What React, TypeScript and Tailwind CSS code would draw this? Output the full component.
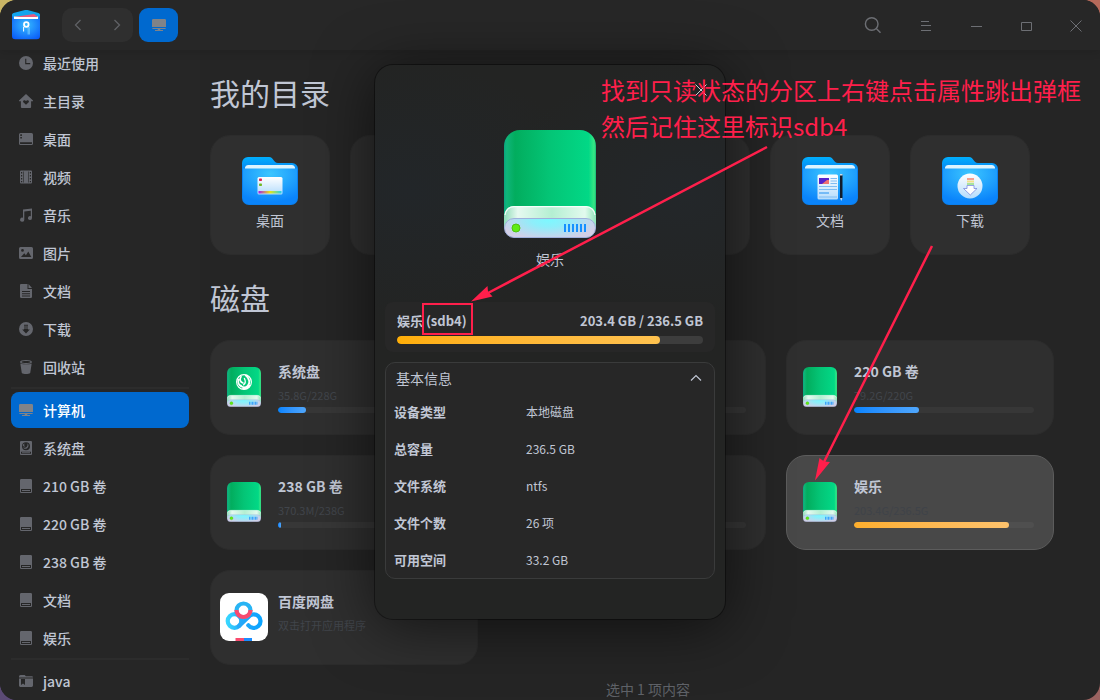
import { useId, type ReactNode } from "react";

type IconName =
  | "recent" | "home" | "desktop" | "video" | "music" | "picture" | "document"
  | "download" | "trash" | "computer" | "system" | "disk" | "folder";

function SideIcon({ name }: { name: IconName }) {
  const shapes: Record<IconName, ReactNode> = {
    recent: (
      <path fillRule="evenodd" d="M7 0a7 7 0 1 1 0 14A7 7 0 0 1 7 0ZM6.2 2.8v5.4h5V7.1H7.3V2.8Z" />
    ),
    home: (
      <path fillRule="evenodd" d="M7 0l7 6.4v.9h-1.9V13a1 1 0 0 1-1 1H2.9a1 1 0 0 1-1-1V7.300H0v-.9ZM7 10.800l2.700-2.600c.9-1.300-.9-2.700-2.200-1.500L7 7.100l-.5-.4C5.200 5.500 3.400 6.900 4.300 8.200Z" />
    ),
    desktop: (
      <path fillRule="evenodd" d="M1.500 1h11A1.500 1.500 0 0 1 14 2.500v9a1.500 1.500 0 0 1-1.500 1.500h-11A1.500 1.500 0 0 1 0 11.500v-9A1.500 1.500 0 0 1 1.500 1ZM1.300 2.300v1.600h1.600V2.300ZM1.300 5v1.600h1.600V5ZM1 10.200v1.300c0 .3.200.5.5.5h11c.3 0 .5-.2.500-.5v-1.300Z" />
    ),
    video: (
      <path fillRule="evenodd" d="M2 .5h10a1 1 0 0 1 1 1v11a1 1 0 0 1-1 1H2a1 1 0 0 1-1-1v-11a1 1 0 0 1 1-1ZM2 2v1.500h1.200V2Zm0 3v1.500h1.200V5Zm0 3v1.500h1.200V8Zm0 3v1.300h1.200V11Zm8.800-9v1.500H12V2Zm0 3v1.500H12V5Zm0 3v1.500H12V8Zm0 3v1.300H12V11ZM4 1.500v11h.6v-11Zm5.400 0v11h.6v-11Z" />
    ),
    music: (
      <path d="M4 1.600L13 .6v9.200a2 2 0 1 1-1.200-1.600V2.800L5.300 3.500v8a2.100 2.100 0 1 1-1.300-1.700Z" />
    ),
    picture: (
      <path fillRule="evenodd" d="M1.500 1h11A1.500 1.500 0 0 1 14 2.500v9a1.500 1.500 0 0 1-1.500 1.500h-11A1.500 1.500 0 0 1 0 11.500v-9A1.500 1.500 0 0 1 1.500 1ZM3.500 3a1.400 1.400 0 1 0 0 2.800 1.400 1.400 0 0 0 0-2.800ZM2 11h10.300L9.300 5.500 6.900 9.200 5.300 7.200Z" />
    ),
    document: (
      <path fillRule="evenodd" d="M2 0h6.500v5H13v7.800a1.200 1.200 0 0 1-1.200 1.200H2.200A1.200 1.200 0 0 1 1 12.800V1a1 1 0 0 1 1-1ZM9.500 0L13 4H9.500ZM3 7v1h8V7Zm0 2.200v1h8v-1Zm0 2.300v1h8v-1Z" />
    ),
    download: (
      <path fillRule="evenodd" d="M7 0a7 7 0 1 1 0 14A7 7 0 0 1 7 0ZM5 2.700v1h4v-1ZM5 4.600v1h4v-1ZM5 6.500v1H3.200L7 11.400l3.800-3.900H9v-1Z" />
    ),
    trash: (
      <>
        <path fillRule="evenodd" d="M7 0c3.500 0 6 .8 6 2S10.500 4 7 4 1 3.200 1 2s2.500-2 6-2Zm0 1C4.500 1 2.500 1.400 2.500 2S4.500 3 7 3s4.500-.4 4.500-1S9.500 1 7 1Z" />
        <path d="M1.300 3.400C4.500 4.600 9.500 4.600 12.700 3.400L11.200 13c-1.500 1.300-6.900 1.300-8.400 0Z" />
      </>
    ),
    computer: (
      <path d="M1.300 1h11.400A1.300 1.300 0 0 1 14 2.300V9H0V2.300A1.300 1.300 0 0 1 1.300 1ZM0 10h14c-.2.700-.6 1-1.300 1H8.300v.9H11v1H3v-1h2.700V11H1.300c-.7 0-1.100-.3-1.300-1Z" />
    ),
    system: (
      <>
        <path fillRule="evenodd" d="M2 0h10a1 1 0 0 1 1 1v12a1 1 0 0 1-1 1H2a1 1 0 0 1-1-1V1a1 1 0 0 1 1-1ZM7 1.200a4 4 0 1 0 0 8 4 4 0 0 0 0-8ZM2 10.800v2h10v-2Z" />
        <path d="M8.500 2.200c1.600 1.200 1.500 4-.7 5.300-1.700.9-3.300 0-3.500-1.300 1.200 1 2.600.8 3.500-.4.800-1.100.8-2.300.7-3.600ZM5.700 2.500c-.8 1-.7 2.500.7 2.900-1.400.5-2.800-.5-2.600-1.500.3-.7 1.100-1.200 1.900-1.400Z" />
        <path d="M3 11.300h8v.8H3Z" />
      </>
    ),
    disk: (
      <path fillRule="evenodd" d="M2.200 0h9.600A1.200 1.200 0 0 1 13 1.200v11.600a1.200 1.200 0 0 1-1.200 1.200H2.200A1.200 1.200 0 0 1 1 12.800V1.200A1.200 1.200 0 0 1 2.200 0ZM2 10v3h10v-3Zm1 1h8v1H3Z" />
    ),
    folder: (
      <path fillRule="evenodd" d="M1.500 1h4.200l1.200 1.300h6A1.100 1.100 0 0 1 14 3.400H0v-.9A1.500 1.500 0 0 1 1.500 1ZM0 4.400h14v7.200a1.400 1.400 0 0 1-1.400 1.400H1.400A1.400 1.400 0 0 1 0 11.600ZM2 5v6l2-1.600L6 11V5Z" />
    ),
  };
  return (
    <svg viewBox="0 0 14 14" className="size-3.5 shrink-0" fill="currentColor" aria-hidden="true">
      {shapes[name]}
    </svg>
  );
}

function DriveIcon({ className, system }: { className: string; system?: boolean }) {
  const id = useId();
  return (
    <svg viewBox="0 0 92 108" className={className} aria-hidden="true">
      <defs>
        <linearGradient id={`${id}b`}>
          <stop offset="0" stopColor="#0aa57f" />
          <stop offset="0.03" stopColor="#10b57a" />
          <stop offset="0.12" stopColor="#02ad5e" />
          <stop offset="0.5" stopColor="#04c576" />
          <stop offset="0.92" stopColor="#02d886" />
          <stop offset="0.98" stopColor="#38e884" />
          <stop offset="1" stopColor="#18b878" />
        </linearGradient>
        <linearGradient id={`${id}t`}>
          <stop offset="0" stopColor="#8fdcb8" />
          <stop offset="0.15" stopColor="#e6f9f0" />
          <stop offset="0.52" stopColor="#b4efd2" />
          <stop offset="0.88" stopColor="#e2faee" />
          <stop offset="1" stopColor="#90e4ba" />
        </linearGradient>
        <radialGradient id={`${id}f`} gradientUnits="userSpaceOnUse" cx="0" cy="0" r="1" gradientTransform="translate(45 90) scale(50 20)">
          <stop offset="0" stopColor="#7cf8ff" />
          <stop offset="0.35" stopColor="#8eeefa" />
          <stop offset="0.75" stopColor="#b9daef" />
          <stop offset="1" stopColor="#d2cfe6" />
        </radialGradient>
      </defs>
      <path d="M0 16A16 16 0 0 1 16 0h60a16 16 0 0 1 16 16v76H0Z" fill={`url(#${id}b)`} />
      <path d="M0 86a10 10 0 0 1 10-10h72a10 10 0 0 1 10 10v12H0Z" fill={`url(#${id}t)`} />
      <path d="M1 85a9 9 0 0 1 9-8.400h72a9 9 0 0 1 9 8.400" fill="none" stroke="#f4fffa" strokeWidth="1.200" />
      <rect x="0.500" y="88.500" width="91" height="19" rx="9.500" fill={`url(#${id}f)`} stroke="#9fb0dc" />
      <circle cx="12" cy="98" r="4" fill="#5fec14" stroke="#52c010" />
      <path d="M60 98h23" stroke="#1690ff" strokeWidth="8" strokeDasharray="2 2" />
      {system && (
        <g fill="none" stroke="#fff" strokeLinecap="round">
          <circle cx="46" cy="40.500" r="20" strokeWidth="3.200" />
          <path d="M51 23c11 8 12 21 5 28-6 6-15 5-19-1" strokeWidth="5" />
          <path d="M47 31c4 7 3 13-2 17" strokeWidth="3.500" />
          <path d="M38 26c-5 8-2 15 5 17M31 34c-2 9 2 15 7 18" strokeWidth="4.500" />
          <path d="M61 50c-4 6-11 9-18 8" strokeWidth="4" />
        </g>
      )}
    </svg>
  );
}

type Emblem = "desktop" | "video" | "music" | "picture" | "document" | "download";

function FolderIcon({ emblem }: { emblem: Emblem }) {
  const id = useId();
  return (
    <svg viewBox="0 0 56 50" className="h-[50px] w-14" aria-hidden="true">
      <defs>
        <radialGradient id={`${id}f`} cx="0.5" cy="0.15" r="0.8">
          <stop offset="0" stopColor="#3cc6ff" />
          <stop offset="1" stopColor="#0a84fb" />
        </radialGradient>
        <linearGradient id={`${id}k`} x2="0" y2="1">
          <stop offset="0" stopColor="#00b0ff" />
          <stop offset="0.3" stopColor="#0a7fee" />
        </linearGradient>
        <linearGradient id={`${id}w`} x2="0" y2="1">
          <stop offset="0" stopColor="#fff" />
          <stop offset="1" stopColor="#b4dcfc" />
        </linearGradient>
        <linearGradient id={`${id}r`}>
          <stop offset="0" stopColor="#a81ee8" />
          <stop offset="0.5" stopColor="#e8e614" />
          <stop offset="1" stopColor="#20d0f0" />
        </linearGradient>
      </defs>
      <path d="M0 7a6 6 0 0 1 6-6h21c5 0 4 6 9 6h14a6 6 0 0 1 6 6v29a7 7 0 0 1-7 7H7a7 7 0 0 1-7-7Z" fill={`url(#${id}k)`} />
      <path d="M3 14V11.500A3 3 0 0 1 6 9h44a3 3 0 0 1 3 2.500V14Z" fill="#dcf4ff" />
      <path d="M1 12.500h54V42a6 6 0 0 1-6 6H7a6 6 0 0 1-6-6Z" fill={`url(#${id}f)`} />
      {emblem === "desktop" && (
        <g>
          <rect x="15.500" y="21" width="25" height="17.500" rx="1.500" fill={`url(#${id}w)`} />
          <rect x="17" y="22.500" width="3" height="2.500" rx="0.800" fill="#e02050" />
          <rect x="17" y="27.500" width="3" height="2.500" rx="0.800" fill="#72b822" />
          <rect x="16.500" y="35" width="23" height="2.500" fill={`url(#${id}r)`} />
        </g>
      )}
      {emblem === "document" && (
        <g>
          <rect x="15.500" y="18.500" width="20.500" height="25" rx="1.500" fill={`url(#${id}w)`} />
          <rect x="17" y="22" width="10" height="6" fill="#5522cc" />
          <path d="M20 28l5-4h2v4Z" fill="#f07070" />
          <path d="M28.500 22.500H35M28.500 25H35M28.500 27.500H35M17 30.500h18M17 33.500h18M17 41h18" stroke="#7fbcf2" />
          <path d="M17 37h10" stroke="#2090f0" />
          <rect x="38" y="18" width="2.500" height="25" rx="1" fill="#111c2c" />
          <path d="M38 42h2.500l-1.200 3ZM38 18h2.500v1.500H38Z" fill="#c8dcec" />
        </g>
      )}
      {emblem === "download" && (
        <g>
          <circle cx="28" cy="30" r="12.500" fill={`url(#${id}w)`} />
          <rect x="25" y="22" width="7" height="2" fill="#f5a090" />
          <rect x="25" y="24.500" width="7" height="2" fill="#f2e08a" />
          <rect x="25" y="27" width="7" height="2" fill="#a8e49c" />
          <path d="M25 29.500h7v3h3L28.300 39 21.500 32.500H25Z" fill="#fff" stroke="#7a8ce0" strokeWidth="0.800" />
        </g>
      )}
      {emblem === "video" && <rect x="17" y="21" width="22" height="18" rx="2" fill={`url(#${id}w)`} />}
      {emblem === "picture" && <rect x="16" y="20" width="24" height="20" rx="2" fill={`url(#${id}w)`} />}
      {emblem === "music" && <circle cx="28" cy="30" r="11" fill={`url(#${id}w)`} />}
    </svg>
  );
}

function NetdiskIcon() {
  return (
    <svg viewBox="0 0 48 48" className="size-12" aria-hidden="true">
      <defs>
        <linearGradient id="nd-left">
          <stop offset="0" stopColor="#38d6ff" />
          <stop offset="1" stopColor="#22aaf8" />
        </linearGradient>
        <linearGradient id="nd-right">
          <stop offset="0" stopColor="#28a8f8" />
          <stop offset="1" stopColor="#0aa4ff" />
        </linearGradient>
      </defs>
      <rect width="48" height="48" rx="9" fill="#fff" />
      <circle cx="14.500" cy="28" r="6.800" fill="none" stroke="url(#nd-left)" strokeWidth="4.200" />
      <path d="M19 33l9-8.500a6.800 6.800 0 1 1 .3 7.800" fill="none" stroke="url(#nd-right)" strokeWidth="4.200" strokeLinecap="round" />
      <circle cx="23.500" cy="17.500" r="7" fill="none" stroke="#28b4f4" strokeWidth="4.200" />
      <path d="M16.500 17a7 7 0 1 0 14 0" fill="none" stroke="#f94a6e" strokeWidth="4.200" />
      <path d="M15.500 45H24v3h-8.500Z" fill="#f94a6e" />
      <path d="M24 45h8v3h-8Z" fill="#188cff" />
    </svg>
  );
}

function SideItem({ icon, label, active }: { icon: IconName; label: string; active?: boolean }) {
  return (
    <li>
      <a
        href="#"
        className={
          active
            ? "flex h-9 items-center gap-2.5 rounded-lg bg-[#0069cf] px-2 text-sm font-medium text-white"
            : "flex h-9 items-center gap-2.5 rounded-lg px-2 text-sm font-medium text-[#c0c6d4]"
        }
      >
        <span className={active ? "text-[#808388]" : "text-[#64666d]"}>
          <SideIcon name={icon} />
        </span>
        {label}
      </a>
    </li>
  );
}

function UsageBar({ value, warn, large }: { value: number; warn?: boolean; large?: boolean }) {
  return (
    <div
      role="progressbar"
      aria-valuenow={value}
      className={
        large
          ? "h-2 overflow-hidden rounded-full bg-[#3d3d3d]"
          : "h-1.5 w-[180px] overflow-hidden rounded-full bg-white/4"
      }
    >
      <div
        className={
          warn
            ? large
              ? "h-full rounded-full bg-linear-to-r from-[#ffae05] to-[#ffc24f]"
              : "h-full rounded-full bg-linear-to-r from-[#fdae2c] to-[#fdc26c]"
            : "h-full rounded-full bg-linear-to-r from-[#0284ff] to-[#4fa6fb]"
        }
        style={{ width: `${value}%` }}
      />
    </div>
  );
}

interface Volume {
  name: string;
  usage?: string;
  value?: number;
  warn?: boolean;
  selected?: boolean;
  kind?: "system" | "netdisk";
}

function VolumeCard({ name, usage, value, warn, selected, kind }: Volume) {
  return (
    <li
      className={
        selected
          ? "flex h-[95px] gap-2.5 rounded-[20px] border border-[#5c5c5c] bg-[#484848] pl-[9px]"
          : "flex h-[95px] gap-2.5 rounded-[20px] border border-[#2c2c2c] bg-[#2f2f2f] pl-[9px]"
      }
    >
      <div className="flex w-12 items-center justify-center pb-0.5">
        {kind === "netdisk" ? <NetdiskIcon /> : <DriveIcon className="h-10 w-[34px]" system={kind === "system"} />}
      </div>
      <div className="pt-5">
        <h3 className="text-sm leading-5 font-bold text-[#c0c6d4]">{name}</h3>
        {usage && (
          <p className={selected ? "mt-1.5 h-5 text-[11px] leading-4 text-[#3f4349]" : "mt-1.5 h-5 text-[11px] leading-4 text-[#41454b]"}>
            {usage}
          </p>
        )}
        {value !== undefined && <UsageBar value={value} warn={warn} />}
      </div>
    </li>
  );
}

const places: [IconName, string][] = [
  ["recent", "最近使用"],
  ["home", "主目录"],
  ["desktop", "桌面"],
  ["video", "视频"],
  ["music", "音乐"],
  ["picture", "图片"],
  ["document", "文档"],
  ["download", "下载"],
  ["trash", "回收站"],
];

const devices: [IconName, string][] = [
  ["computer", "计算机"],
  ["system", "系统盘"],
  ["disk", "210 GB 卷"],
  ["disk", "220 GB 卷"],
  ["disk", "238 GB 卷"],
  ["disk", "文档"],
  ["disk", "娱乐"],
];

const folders: [Emblem, string][] = [
  ["desktop", "桌面"],
  ["video", "视频"],
  ["music", "音乐"],
  ["picture", "图片"],
  ["document", "文档"],
  ["download", "下载"],
];

const volumes: Volume[] = [
  { name: "系统盘", usage: "35.8G/228G", value: 15.7, kind: "system" },
  { name: "210 GB 卷", usage: "–", value: 0 },
  { name: "220 GB 卷", usage: "79.2G/220G", value: 36 },
  { name: "238 GB 卷", usage: "370.3M/238G", value: 1.8 },
  { name: "文档", usage: "–", value: 0 },
  { name: "娱乐", usage: "203.4G/236.5G", value: 86, warn: true, selected: true },
  { name: "百度网盘", usage: "双击打开应用程序", kind: "netdisk" },
];

const details: [string, string][] = [
  ["设备类型", "本地磁盘"],
  ["总容量", "236.5 GB"],
  ["文件系统", "ntfs"],
  ["文件个数", "26 项"],
  ["可用空间", "33.2 GB"],
];

function Header() {
  const control = "flex h-full w-[50px] items-center justify-center pt-0.5 pl-0.5 text-[#6d6f74]";
  return (
    <header className="relative z-10 flex h-[50px] shrink-0 items-center bg-[#272727] pl-3 shadow-[0_2px_8px_rgba(0,0,0,0.12)]">
      <svg viewBox="0 0 28 30" className="h-[30px] w-7" aria-hidden="true">
        <defs>
          <radialGradient id="logo" cx="0.5" cy="0.4" r="0.7">
            <stop offset="0" stopColor="#36bcff" />
            <stop offset="1" stopColor="#0a5cf8" />
          </radialGradient>
        </defs>
        <path d="M0 5c0-1 .5-1.500 1.500-2L13 0c1-.3 1.500-.3 2.500 0L26.500 3C27.500 3.500 28 4 28 5v5H0Z" fill="#12a4ee" />
        <path d="M2 6.500h24V10H2Z" fill="#fff" />
        <path d="M2 7l20-3 4 3Z" fill="#e85a80" />
        <path d="M0 5.500L2 9h24l2-3.500V26a3.300 3.300 0 0 1-3.300 3.300H3.300A3.300 3.300 0 0 1 0 26Z" fill="url(#logo)" />
        <path d="M15.500 17H18v7.500h-2.500Z" fill="#7ccfff" opacity="0.600" />
        <circle cx="14.300" cy="14.500" r="2.300" fill="none" stroke="#fff" strokeWidth="1.800" />
        <path d="M11.600 17v4.500" stroke="#fff" strokeWidth="1" />
      </svg>
      <div className="ml-[22px] flex h-[34px] w-[71px] rounded-[10px] bg-[#2f2f2f] text-[#606266]">
        <button aria-label="后退" className="flex flex-1 items-center pl-3">
          <svg viewBox="0 0 8 12" className="h-3 w-2" fill="none" stroke="currentColor" strokeWidth="1.300"><path d="M6.500 1L1.500 6l5 5" /></svg>
        </button>
        <button aria-label="前进" className="flex flex-1 items-center justify-end pr-3">
          <svg viewBox="0 0 8 12" className="h-3 w-2" fill="none" stroke="currentColor" strokeWidth="1.300"><path d="M1.500 1l5 5-5 5" /></svg>
        </button>
      </div>
      <button aria-label="计算机" className="ml-1.5 flex h-[34px] w-[39px] items-center justify-center rounded-[9px] bg-[#0069cf] text-[#808388]">
        <SideIcon name="computer" />
      </button>
      <div className="ml-auto flex h-full">
        <button aria-label="搜索" className="mr-[3px] flex h-full w-[50px] items-center justify-center pl-0.5 text-[#6d6f74]">
          <svg viewBox="0 0 18 18" className="size-[18px]" fill="none" stroke="currentColor" strokeWidth="1.400"><circle cx="7.700" cy="8" r="6.300" /><path d="M12.300 12.500l4.200 4.200" /></svg>
        </button>
        <button aria-label="菜单" className={control}>
          <svg viewBox="0 0 12 12" className="size-3" fill="none" stroke="currentColor"><path d="M1 1.500h8M1 5.500h10M1 10.500h10" /></svg>
        </button>
        <button aria-label="最小化" className={control}>
          <svg viewBox="0 0 12 12" className="size-3" fill="none" stroke="currentColor"><path d="M1 6.500h11" /></svg>
        </button>
        <button aria-label="最大化" className={control}>
          <svg viewBox="0 0 12 12" className="size-3" fill="none" stroke="currentColor"><path d="M1.500 2.500h10v8h-10Z" /></svg>
        </button>
        <button aria-label="关闭" className={control}>
          <svg viewBox="0 0 12 12" className="size-3" fill="none" stroke="currentColor"><path d="M.5.500l11 11M11.500.500l-11 11" /></svg>
        </button>
      </div>
    </header>
  );
}

function PropertiesDialog() {
  return (
    <div
      role="dialog"
      aria-label="娱乐"
      className="absolute top-[65px] left-1/2 z-20 w-[350px] -translate-x-1/2 rounded-[18px] bg-[#232423] bg-[radial-gradient(ellipse_180px_130px_at_10%_23%,#222629,transparent),radial-gradient(ellipse_180px_130px_at_88%_23%,#23272a,transparent)] px-2.5 pb-10 shadow-[0_0_0_1px_rgba(0,0,0,0.4),0_6px_60px_rgba(0,0,0,0.6)]"
    >
      <button aria-label="关闭" className="absolute top-[11px] right-2.5 flex size-7 items-center justify-center text-[#c8ccd4]">
        <svg viewBox="0 0 12 12" className="size-3" fill="none" stroke="currentColor"><path d="M.5.500l11 11M11.500.500l-11 11" /></svg>
      </button>
      <div className="flex flex-col items-center pt-[65px]">
        <DriveIcon className="h-[108px] w-[92px]" />
        <h2 className="mt-[11px] text-sm leading-5 text-[#c0c6d4]">娱乐</h2>
      </div>
      <section className="mt-[33px] rounded-lg bg-[#272727] px-3 pt-[9px] pb-2">
        <div className="flex justify-between pb-[5px] text-[13px] leading-5 font-bold text-[#c0c6d4]">
          <span>
            娱乐 <span>(sdb4)</span>
          </span>
          <span>203.4 GB / 236.5 GB</span>
        </div>
        <UsageBar value={86} warn large />
      </section>
      <section className="mt-2.5 rounded-[10px] border border-[#3a3b3b] bg-[#272727]">
        <button className="flex h-[30px] w-full items-center justify-between pr-3 pl-2.5 text-sm text-[#c0c6d4]">
          基本信息
          <svg viewBox="0 0 12 8" className="h-2 w-3" fill="none" stroke="currentColor" strokeWidth="1.200"><path d="M1 6.500l5-5 5 5" /></svg>
        </button>
        <dl>
          {details.map(([term, value]) => (
            <div key={term} className="flex h-[37px] items-center pl-2 text-[#c0c6d4]">
              <dt className="w-[132px] text-[13px] font-bold">{term}</dt>
              <dd className="text-xs">{value}</dd>
            </div>
          ))}
        </dl>
      </section>
    </div>
  );
}

function Annotations() {
  return (
    <div className="pointer-events-none absolute inset-0 z-30 text-[#ff1f4b]">
      <svg className="absolute inset-0 size-full" aria-hidden="true">
        <g stroke="currentColor" strokeWidth="2.500" fill="none">
          <rect x="423" y="304" width="49" height="30" strokeWidth="2" />
          <path d="M767 147L488 293M932 246L824 462" />
        </g>
        <path d="M471 301.500l16.500-15.500 .5 5.500 4.500 5ZM815 480.500l4.500-22.500 4.500 3.500 6 .5Z" fill="currentColor" />
      </svg>
      <p className="absolute top-[72px] left-[601px] text-2xl leading-9 whitespace-nowrap">
        找到只读状态的分区上右键点击属性跳出弹框
        <br />
        然后记住这里标识sdb4
      </p>
    </div>
  );
}

export default function App() {
  return (
    <div className="relative h-screen overflow-hidden bg-[conic-gradient(from_0deg,#b5695a_90deg,#9a6260_90deg_180deg,#5b4a75_180deg_270deg,#c9b565_270deg)] font-['Noto_Sans_CJK_SC',sans-serif]">
      <div className="relative flex h-full flex-col overflow-hidden rounded-[17px] bg-[#252525]">
        <Header />
        <div className="flex min-h-0 flex-1">
          <nav className="-mt-[5px] w-[200px] shrink-0 bg-[#262626] px-[11px]">
            <ul className="flex flex-col gap-0.5">
              {places.map(([icon, label]) => <SideItem key={label} icon={icon} label={label} />)}
            </ul>
            <hr className="mt-0.5 mb-[3px] border-t-2 border-[#2c2c2c]" />
            <ul className="flex flex-col gap-0.5">
              {devices.map(([icon, label]) => <SideItem key={label} icon={icon} label={label} active={icon === "computer"} />)}
            </ul>
            <hr className="mt-0.5 mb-[3px] border-t-2 border-[#2c2c2c]" />
            <ul>
              <SideItem icon="folder" label="java" />
            </ul>
          </nav>
          <main className="flex min-w-0 flex-1 flex-col">
            <div className="min-h-0 flex-1 overflow-hidden pl-2.5">
              <h2 className="mt-[22px] mb-[23px] text-[30px] leading-10 text-[#c0c6d4]">我的目录</h2>
              <ul className="grid grid-cols-[repeat(auto-fill,120px)] gap-5">
                {folders.map(([emblem, label]) => (
                  <li key={label} className="flex h-[120px] flex-col items-center rounded-[20px] border border-[#2c2c2c] bg-[#2f2f2f] pt-5">
                    <FolderIcon emblem={emblem} />
                    <span className="mt-1 text-sm leading-5 text-[#c0c6d4]">{label}</span>
                  </li>
                ))}
              </ul>
              <h2 className="mt-[22px] mb-[23px] text-[30px] leading-10 text-[#c0c6d4]">磁盘</h2>
              <ul className="grid grid-cols-[repeat(auto-fill,268px)] gap-5">
                {volumes.map((volume) => <VolumeCard key={volume.name} {...volume} />)}
              </ul>
            </div>
            <footer className="h-[21px] pr-1 text-center text-sm leading-5 text-[#5f6268]">选中 1 项内容</footer>
          </main>
        </div>
        <PropertiesDialog />
      </div>
      <Annotations />
    </div>
  );
}
